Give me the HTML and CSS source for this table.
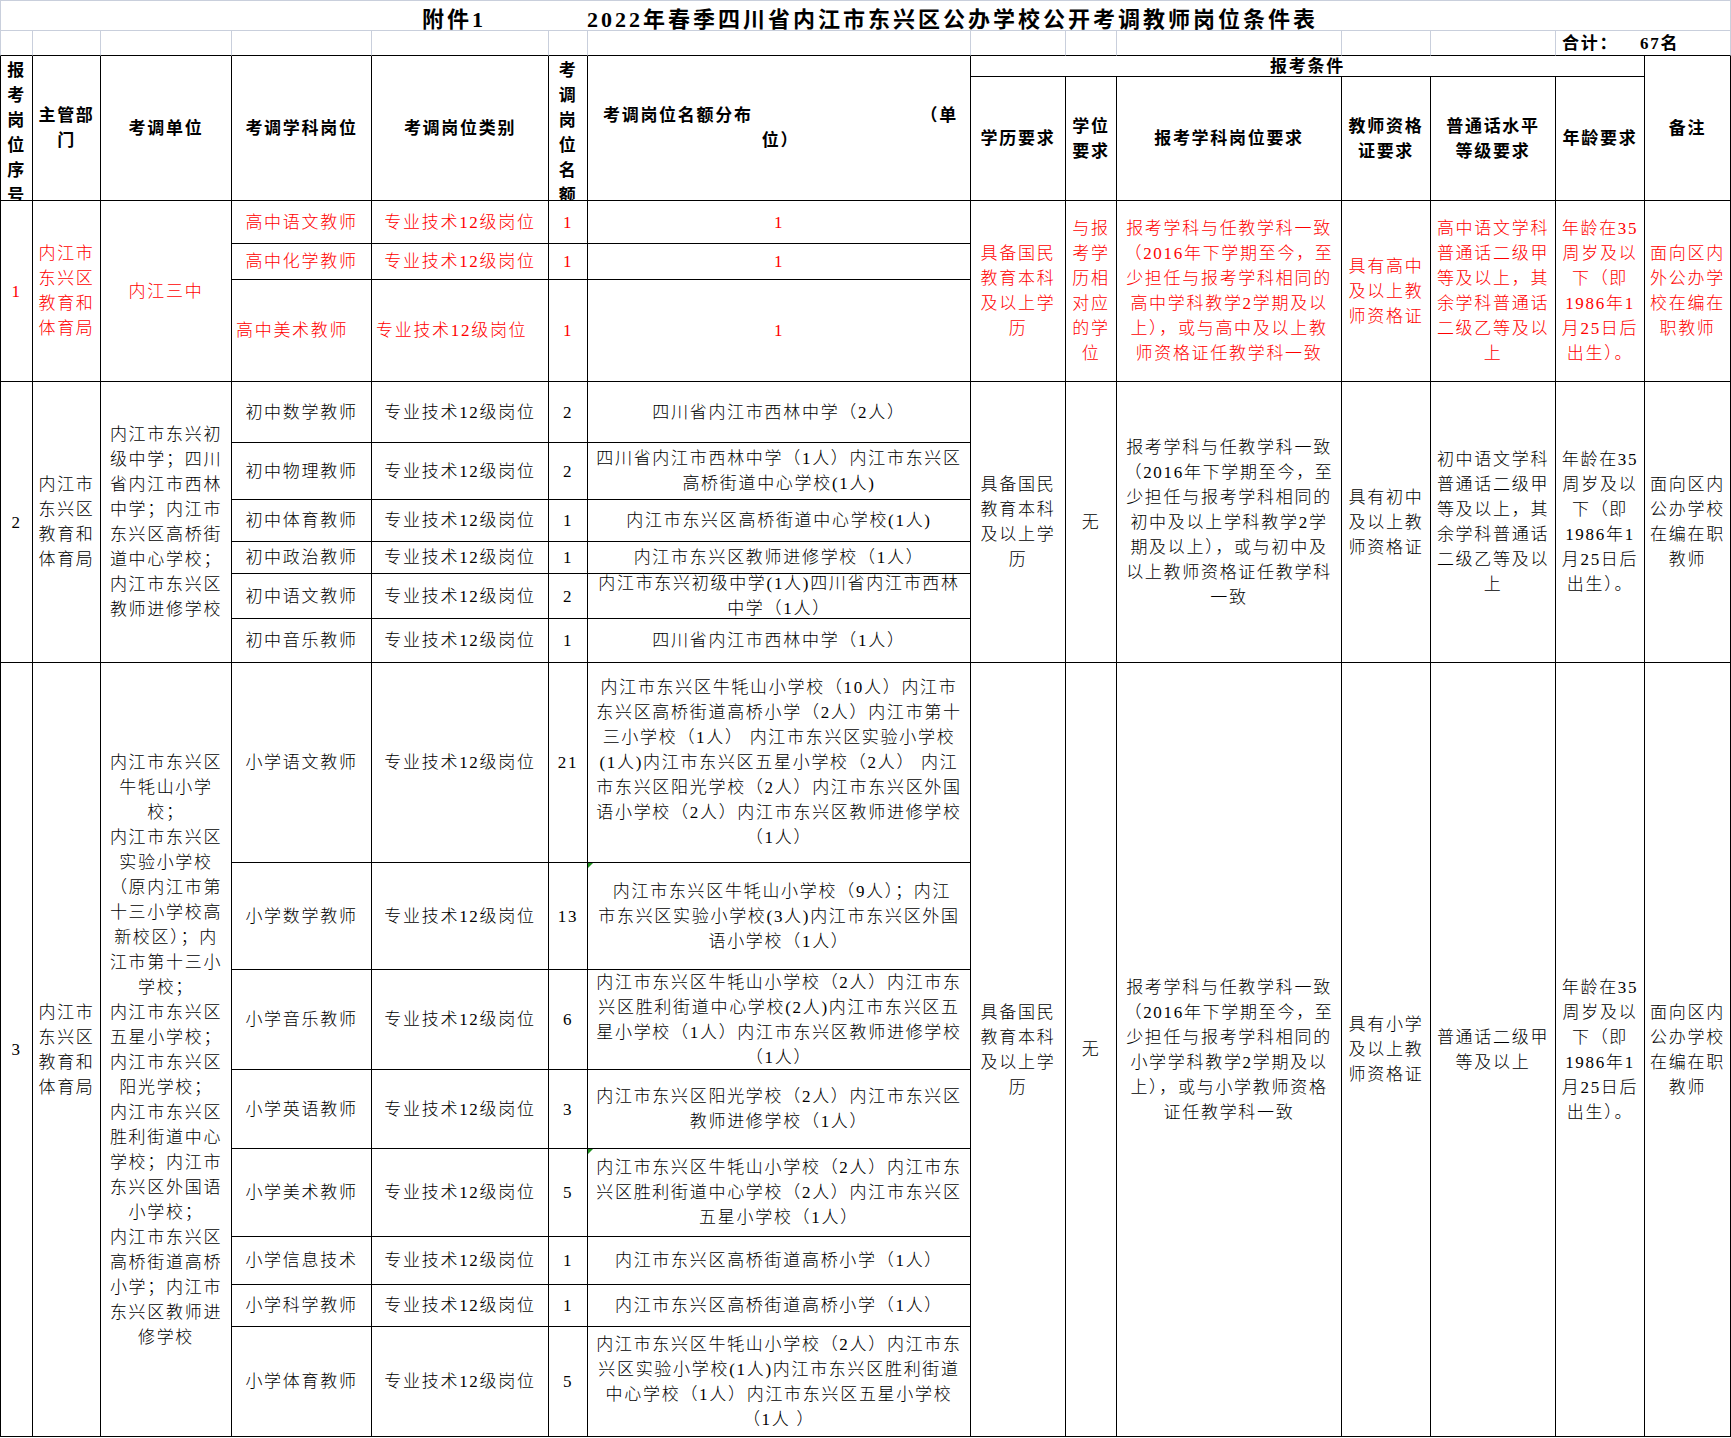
FILE: index.html
```html
<!DOCTYPE html>
<html lang="zh-CN">
<head>
<meta charset="utf-8">
<title>2022年春季四川省内江市东兴区公办学校公开考调教师岗位条件表</title>
<link rel="stylesheet" href="styles.css">
</head>
<body>
<div class="sheet">
  <div class="title"><span class="att">附件1</span><span>2022年春季四川省内江市东兴区公办学校公开考调教师岗位条件表</span></div>

  <div class="cell blank first"></div>
  <div class="cell blank"></div>
  <div class="cell blank"></div>
  <div class="cell blank"></div>
  <div class="cell blank"></div>
  <div class="cell blank"></div>
  <div class="cell blank"></div>
  <div class="cell blank"></div>
  <div class="cell blank"></div>
  <div class="cell blank"></div>
  <div class="cell blank"></div>
  <div class="cell blank"></div>
  <div class="cell blank total c2"><span>合计：</span><span class="num">67名</span></div>

  <div class="cell hd first r2 vcell"><div>报<br>考<br>岗<br>位<br>序<br>号</div></div>
  <div class="cell hd r2"><div>主管部<br>门</div></div>
  <div class="cell hd r2"><div>考调单位</div></div>
  <div class="cell hd r2"><div>考调学科岗位</div></div>
  <div class="cell hd r2"><div>考调岗位类别</div></div>
  <div class="cell hd r2 vcell"><div>考<br>调<br>岗<br>位<br>名<br>额</div></div>
  <div class="cell hd r2"><div class="dist"><div class="dl1"><span>考调岗位名额分布</span><span>（单</span></div><div>位）</div></div></div>
  <div class="cell hd c6"><div>报考条件</div></div>
  <div class="cell hd r2"><div>备注</div></div>
  <div class="cell hd"><div>学历要求</div></div>
  <div class="cell hd"><div>学位<br>要求</div></div>
  <div class="cell hd"><div>报考学科岗位要求</div></div>
  <div class="cell hd"><div>教师资格<br>证要求</div></div>
  <div class="cell hd"><div>普通话水平<br>等级要求</div></div>
  <div class="cell hd"><div>年龄要求</div></div>

  <!-- group 1 -->
  <div class="cell red first r3"><div>1</div></div>
  <div class="cell red r3"><div>内江市<br>东兴区<br>教育和<br>体育局</div></div>
  <div class="cell red r3"><div>内江三中</div></div>
  <div class="cell red"><div>高中语文教师</div></div>
  <div class="cell red"><div>专业技术12级岗位</div></div>
  <div class="cell red"><div>1</div></div>
  <div class="cell red"><div>1</div></div>
  <div class="cell red r3"><div>具备国民<br>教育本科<br>及以上学<br>历</div></div>
  <div class="cell red r3"><div>与报<br>考学<br>历相<br>对应<br>的学<br>位</div></div>
  <div class="cell red r3"><div>报考学科与任教学科一致<br>（2016年下学期至今，至<br>少担任与报考学科相同的<br>高中学科教学2学期及以<br>上），或与高中及以上教<br>师资格证任教学科一致</div></div>
  <div class="cell red r3"><div>具有高中<br>及以上教<br>师资格证</div></div>
  <div class="cell red r3"><div>高中语文学科<br>普通话二级甲<br>等及以上，其<br>余学科普通话<br>二级乙等及以<br>上</div></div>
  <div class="cell red r3"><div>年龄在35<br>周岁及以<br>下（即<br>1986年1<br>月25日后<br>出生）。</div></div>
  <div class="cell red r3"><div>面向区内<br>外公办学<br>校在编在<br>职教师</div></div>
  <div class="cell red"><div>高中化学教师</div></div>
  <div class="cell red"><div>专业技术12级岗位</div></div>
  <div class="cell red"><div>1</div></div>
  <div class="cell red"><div>1</div></div>
  <div class="cell red left"><div>高中美术教师</div></div>
  <div class="cell red left"><div>专业技术12级岗位</div></div>
  <div class="cell red"><div>1</div></div>
  <div class="cell red"><div>1</div></div>

  <!-- group 2 -->
  <div class="cell first r6"><div>2</div></div>
  <div class="cell r6"><div>内江市<br>东兴区<br>教育和<br>体育局</div></div>
  <div class="cell r6"><div>内江市东兴初<br>级中学；四川<br>省内江市西林<br>中学；内江市<br>东兴区高桥街<br>道中心学校；<br>内江市东兴区<br>教师进修学校</div></div>
  <div class="cell"><div>初中数学教师</div></div>
  <div class="cell"><div>专业技术12级岗位</div></div>
  <div class="cell"><div>2</div></div>
  <div class="cell"><div>四川省内江市西林中学（2人）</div></div>
  <div class="cell r6"><div>具备国民<br>教育本科<br>及以上学<br>历</div></div>
  <div class="cell r6"><div>无</div></div>
  <div class="cell r6"><div>报考学科与任教学科一致<br>（2016年下学期至今，至<br>少担任与报考学科相同的<br>初中及以上学科教学2学<br>期及以上），或与初中及<br>以上教师资格证任教学科<br>一致</div></div>
  <div class="cell r6"><div>具有初中<br>及以上教<br>师资格证</div></div>
  <div class="cell r6"><div>初中语文学科<br>普通话二级甲<br>等及以上，其<br>余学科普通话<br>二级乙等及以<br>上</div></div>
  <div class="cell r6"><div>年龄在35<br>周岁及以<br>下（即<br>1986年1<br>月25日后<br>出生）。</div></div>
  <div class="cell r6"><div>面向区内<br>公办学校<br>在编在职<br>教师</div></div>
  <div class="cell"><div>初中物理教师</div></div>
  <div class="cell"><div>专业技术12级岗位</div></div>
  <div class="cell"><div>2</div></div>
  <div class="cell"><div>四川省内江市西林中学（1人）内江市东兴区<br>高桥街道中心学校(1人)</div></div>
  <div class="cell"><div>初中体育教师</div></div>
  <div class="cell"><div>专业技术12级岗位</div></div>
  <div class="cell"><div>1</div></div>
  <div class="cell"><div>内江市东兴区高桥街道中心学校(1人)</div></div>
  <div class="cell"><div>初中政治教师</div></div>
  <div class="cell"><div>专业技术12级岗位</div></div>
  <div class="cell"><div>1</div></div>
  <div class="cell"><div>内江市东兴区教师进修学校（1人）</div></div>
  <div class="cell"><div>初中语文教师</div></div>
  <div class="cell"><div>专业技术12级岗位</div></div>
  <div class="cell"><div>2</div></div>
  <div class="cell"><div>内江市东兴初级中学(1人)四川省内江市西林<br>中学（1人）</div></div>
  <div class="cell"><div>初中音乐教师</div></div>
  <div class="cell"><div>专业技术12级岗位</div></div>
  <div class="cell"><div>1</div></div>
  <div class="cell"><div>四川省内江市西林中学（1人）</div></div>

  <!-- group 3 -->
  <div class="cell first r8"><div>3</div></div>
  <div class="cell r8"><div>内江市<br>东兴区<br>教育和<br>体育局</div></div>
  <div class="cell r8"><div>内江市东兴区<br>牛牦山小学<br>校；<br>内江市东兴区<br>实验小学校<br>（原内江市第<br>十三小学校高<br>新校区）；内<br>江市第十三小<br>学校；<br>内江市东兴区<br>五星小学校；<br>内江市东兴区<br>阳光学校；<br>内江市东兴区<br>胜利街道中心<br>学校；内江市<br>东兴区外国语<br>小学校；<br>内江市东兴区<br>高桥街道高桥<br>小学；内江市<br>东兴区教师进<br>修学校</div></div>
  <div class="cell"><div>小学语文教师</div></div>
  <div class="cell"><div>专业技术12级岗位</div></div>
  <div class="cell"><div>21</div></div>
  <div class="cell"><div>内江市东兴区牛牦山小学校（10人）内江市<br>东兴区高桥街道高桥小学（2人）内江市第十<br>三小学校（1人） 内江市东兴区实验小学校<br>(1人)内江市东兴区五星小学校（2人） 内江<br>市东兴区阳光学校（2人）内江市东兴区外国<br>语小学校（2人）内江市东兴区教师进修学校<br>（1人）</div></div>
  <div class="cell r8"><div>具备国民<br>教育本科<br>及以上学<br>历</div></div>
  <div class="cell r8"><div>无</div></div>
  <div class="cell r8"><div>报考学科与任教学科一致<br>（2016年下学期至今，至<br>少担任与报考学科相同的<br>小学学科教学2学期及以<br>上），或与小学教师资格<br>证任教学科一致</div></div>
  <div class="cell r8"><div>具有小学<br>及以上教<br>师资格证</div></div>
  <div class="cell r8"><div>普通话二级甲<br>等及以上</div></div>
  <div class="cell r8"><div>年龄在35<br>周岁及以<br>下（即<br>1986年1<br>月25日后<br>出生）。</div></div>
  <div class="cell r8"><div>面向区内<br>公办学校<br>在编在职<br>教师</div></div>
  <div class="cell"><div>小学数学教师</div></div>
  <div class="cell"><div>专业技术12级岗位</div></div>
  <div class="cell"><div>13</div></div>
  <div class="cell flag"><div>&nbsp;内江市东兴区牛牦山小学校（9人）；内江<br>市东兴区实验小学校(3人)内江市东兴区外国<br>语小学校（1人）</div></div>
  <div class="cell"><div>小学音乐教师</div></div>
  <div class="cell"><div>专业技术12级岗位</div></div>
  <div class="cell"><div>6</div></div>
  <div class="cell"><div>内江市东兴区牛牦山小学校（2人）内江市东<br>兴区胜利街道中心学校(2人)内江市东兴区五<br>星小学校（1人）内江市东兴区教师进修学校<br>（1人）</div></div>
  <div class="cell"><div>小学英语教师</div></div>
  <div class="cell"><div>专业技术12级岗位</div></div>
  <div class="cell"><div>3</div></div>
  <div class="cell"><div>内江市东兴区阳光学校（2人）内江市东兴区<br>教师进修学校（1人）</div></div>
  <div class="cell"><div>小学美术教师</div></div>
  <div class="cell"><div>专业技术12级岗位</div></div>
  <div class="cell"><div>5</div></div>
  <div class="cell flag"><div>内江市东兴区牛牦山小学校（2人）内江市东<br>兴区胜利街道中心学校（2人）内江市东兴区<br>五星小学校（1人）</div></div>
  <div class="cell"><div>小学信息技术</div></div>
  <div class="cell"><div>专业技术12级岗位</div></div>
  <div class="cell"><div>1</div></div>
  <div class="cell"><div>内江市东兴区高桥街道高桥小学（1人）</div></div>
  <div class="cell"><div>小学科学教师</div></div>
  <div class="cell"><div>专业技术12级岗位</div></div>
  <div class="cell"><div>1</div></div>
  <div class="cell"><div>内江市东兴区高桥街道高桥小学（1人）</div></div>
  <div class="cell"><div>小学体育教师</div></div>
  <div class="cell"><div>专业技术12级岗位</div></div>
  <div class="cell"><div>5</div></div>
  <div class="cell"><div>内江市东兴区牛牦山小学校（2人）内江市东<br>兴区实验小学校(1人)内江市东兴区胜利街道<br>中心学校（1人）内江市东兴区五星小学校<br>（1人 ）</div></div>
</div>
</body>
</html>
```

FILE: styles.css
```css
* {
  box-sizing: border-box;
}

html,
body {
  margin: 0;
  padding: 0;
  background: #ffffff;
}

body {
  font-family: "Liberation Serif", "Noto Sans CJK SC", serif;
  font-size: 17px;
  font-weight: 300;
  letter-spacing: 1.7px;
  color: #000000;
}

.sheet {
  display: grid;
  width: 1731px;
  grid-template-columns: 33px 68px 131px 140px 177px 39px 383px 95px 51px 225px 89px 125px 89px 86px;
  grid-template-rows: 31px 25px 21px 124px 43px 36px 102px 61px 57px 42px 32px 45px 44px 200px 107px 100px 79px 88px 48px 42px 110px;
}

.cell {
  position: relative;
  display: flex;
  align-items: center;
  justify-content: center;
  min-width: 0;
  min-height: 0;
  overflow: hidden;
  border-right: 1px solid #000000;
  border-bottom: 1px solid #000000;
  text-align: center;
  line-height: 25px;
  white-space: nowrap;
}

.first {
  border-left: 1px solid #000000;
}

.r2 { grid-row: span 2; }
.r3 { grid-row: span 3; }
.r6 { grid-row: span 6; }
.r8 { grid-row: span 8; }
.c2 { grid-column: span 2; }
.c6 { grid-column: span 6; }

.title {
  grid-column: span 14;
  display: flex;
  align-items: center;
  padding: 2px 0 0 421px;
  border: 1px solid #c9cfdc;
  font-size: 22px;
  font-weight: bold;
  letter-spacing: 3px;
  white-space: nowrap;
}

.att {
  width: 165px;
}

.blank {
  border-right-color: #c9cfdc;
}

.blank.first {
  border-left-color: #c9cfdc;
}

.total {
  justify-content: flex-start;
  padding-left: 6px;
  font-weight: bold;
}

.total .num {
  margin-left: 22px;
}

.hd {
  font-weight: bold;
}

.vcell {
  padding-top: 10px;
}

.dist {
  width: 100%;
  padding: 0 12px 0 15px;
}

.dl1 {
  display: flex;
  justify-content: space-between;
}

.red {
  color: #ff0000;
}

.left {
  justify-content: flex-start;
  padding-left: 4px;
}

.flag::before {
  content: "";
  position: absolute;
  left: 0;
  top: 0;
  border-top: 5px solid #1f8f1f;
  border-right: 5px solid transparent;
}
```
